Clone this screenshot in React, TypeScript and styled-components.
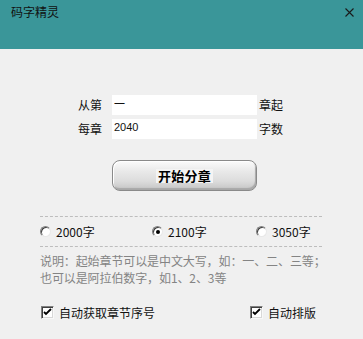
import styled, { createGlobalStyle } from "styled-components";

const Global = createGlobalStyle`
  html, body { margin: 0; padding: 0; background: #f0f0f0; }
  body { font-family: "Noto Sans CJK SC", "Liberation Sans", sans-serif; }
`;

const Window = styled.div`
  width: 363px;
  height: 339px;
  background: #f0f0f0;
  display: flex;
  flex-direction: column;
  overflow: hidden;
  font-size: 12px;
  color: #111;
`;

const TitleBar = styled.div`
  height: 49px;
  box-sizing: border-box;
  background: #3a9699;
  padding: 3px 9px 0 11px;
  display: flex;
  justify-content: space-between;
  align-items: flex-start;
`;

const Title = styled.div`
  font-size: 12px;
  line-height: 18px;
  color: #111;
`;

const Close = styled.div`
  margin-top: 5px;
  width: 9px;
  height: 9px;
  display: flex;
`;

const Form = styled.div`
  margin-top: 46px;
  padding-left: 78px;
  display: flex;
  flex-direction: column;
  gap: 4px;
`;

const Row = styled.div`
  display: flex;
  align-items: center;
  height: 20px;
`;

const Label = styled.span`
  width: 34px;
  line-height: 20px;
  white-space: nowrap;
`;

const Suffix = styled.span`
  margin-left: 2px;
  line-height: 20px;
  white-space: nowrap;
`;

const Field = styled.input`
  width: 145px;
  height: 20px;
  box-sizing: border-box;
  border: none;
  outline: none;
  background: #fff;
  padding: 0 2px 5px;
  font-family: "Liberation Sans", "Noto Sans CJK SC", sans-serif;
  font-size: 11px;
  color: #111;
`;

const StartButton = styled.button`
  margin: 21px 0 0 112px;
  width: 145px;
  height: 31px;
  box-sizing: border-box;
  border: 1px solid #8a8a8a;
  border-radius: 8px;
  background: linear-gradient(#fbfbfb 0%, #e9e9e9 35%, #dcdcdc 70%, #c4c4c4 100%);
  box-shadow: inset 1px 1px 0 #ffffff, inset -1px -2px 1px #a8a8a8;
  display: flex;
  align-items: center;
  justify-content: center;
  padding: 0;
  font-family: "Noto Sans CJK SC", sans-serif;
  cursor: default;
`;

const ButtonLabel = styled.span`
  background: #f4f4f4;
  padding: 0 2px;
  height: 14px;
  line-height: 14px;
  font-size: 13px;
  font-weight: bold;
  color: #000;
  letter-spacing: 0.3px;
`;

const Options = styled.div`
  margin: 25px 0 0 40px;
  width: 282px;
`;

const Dashed = styled.div`
  border-top: 1px dashed #bdbdbd;
  height: 0;
`;

const RadioRow = styled.div`
  display: grid;
  grid-template-columns: 112px 104px 1fr;
  align-items: center;
  height: 29px;
`;

const Choice = styled.label`
  display: flex;
  align-items: center;
  gap: 5px;
  font-size: 12px;
  white-space: nowrap;
`;

const RadioDot = styled.span<{ $on?: boolean }>`
  width: 11px;
  height: 11px;
  box-sizing: border-box;
  border-radius: 50%;
  background: #fff;
  border: 1px solid;
  border-color: #808080 #e8e8e8 #e8e8e8 #808080;
  box-shadow: inset 1px 1px 0 #404040;
  display: flex;
  align-items: center;
  justify-content: center;
  &::after {
    content: "";
    width: 4px;
    height: 4px;
    border-radius: 50%;
    background: ${(p) => (p.$on ? "#000" : "transparent")};
  }
`;

const Note = styled.div`
  margin-top: 5px;
  display: flex;
  flex-direction: column;
  color: #848484;
  font-size: 12px;
  letter-spacing: -0.1px;
`;

const NoteLine = styled.span`
  line-height: 17px;
  white-space: nowrap;
`;

const CheckRow = styled.div`
  margin: 18px 0 0 41px;
  display: grid;
  grid-template-columns: 209px 1fr;
  align-items: center;
`;

const Check = styled.label`
  display: flex;
  align-items: center;
  gap: 5px;
  font-size: 12px;
  white-space: nowrap;
`;

const Box = styled.span`
  width: 13px;
  height: 13px;
  box-sizing: border-box;
  background: #fff;
  border: 1px solid;
  border-color: #808080 #f8f8f8 #f8f8f8 #808080;
  box-shadow: inset 1px 1px 0 #404040, inset -1px -1px 0 #d8d8d8;
  display: flex;
  align-items: center;
  justify-content: center;
`;

function Tick() {
  return (
    <svg width="9" height="9" viewBox="0 0 9 9">
      <path d="M1 4 L3 6 L8 1" stroke="#000" strokeWidth="1.8" fill="none" />
    </svg>
  );
}

export default function App() {
  return (
    <>
      <Global />
      <Window>
        <TitleBar>
          <Title>码字精灵</Title>
          <Close>
            <svg width="9" height="9" viewBox="0 0 9 9">
              <path d="M0.5 0.5 L8.5 8.5 M8.5 0.5 L0.5 8.5" stroke="#1a1a1a" strokeWidth="1.1" />
            </svg>
          </Close>
        </TitleBar>

        <Form>
          <Row>
            <Label>从第</Label>
            <Field readOnly value="一" />
            <Suffix>章起</Suffix>
          </Row>
          <Row>
            <Label>每章</Label>
            <Field readOnly value="2040" />
            <Suffix>字数</Suffix>
          </Row>
        </Form>

        <StartButton>
          <ButtonLabel>开始分章</ButtonLabel>
        </StartButton>

        <Options>
          <Dashed />
          <RadioRow>
            <Choice>
              <RadioDot />
              2000字
            </Choice>
            <Choice>
              <RadioDot $on />
              2100字
            </Choice>
            <Choice>
              <RadioDot />
              3050字
            </Choice>
          </RadioRow>
          <Dashed />
          <Note>
            <NoteLine>说明：起始章节可以是中文大写，如：一、二、三等；</NoteLine>
            <NoteLine>也可以是阿拉伯数字，如1、2、3等</NoteLine>
          </Note>
        </Options>

        <CheckRow>
          <Check>
            <Box>
              <Tick />
            </Box>
            自动获取章节序号
          </Check>
          <Check>
            <Box>
              <Tick />
            </Box>
            自动排版
          </Check>
        </CheckRow>
      </Window>
    </>
  );
}
